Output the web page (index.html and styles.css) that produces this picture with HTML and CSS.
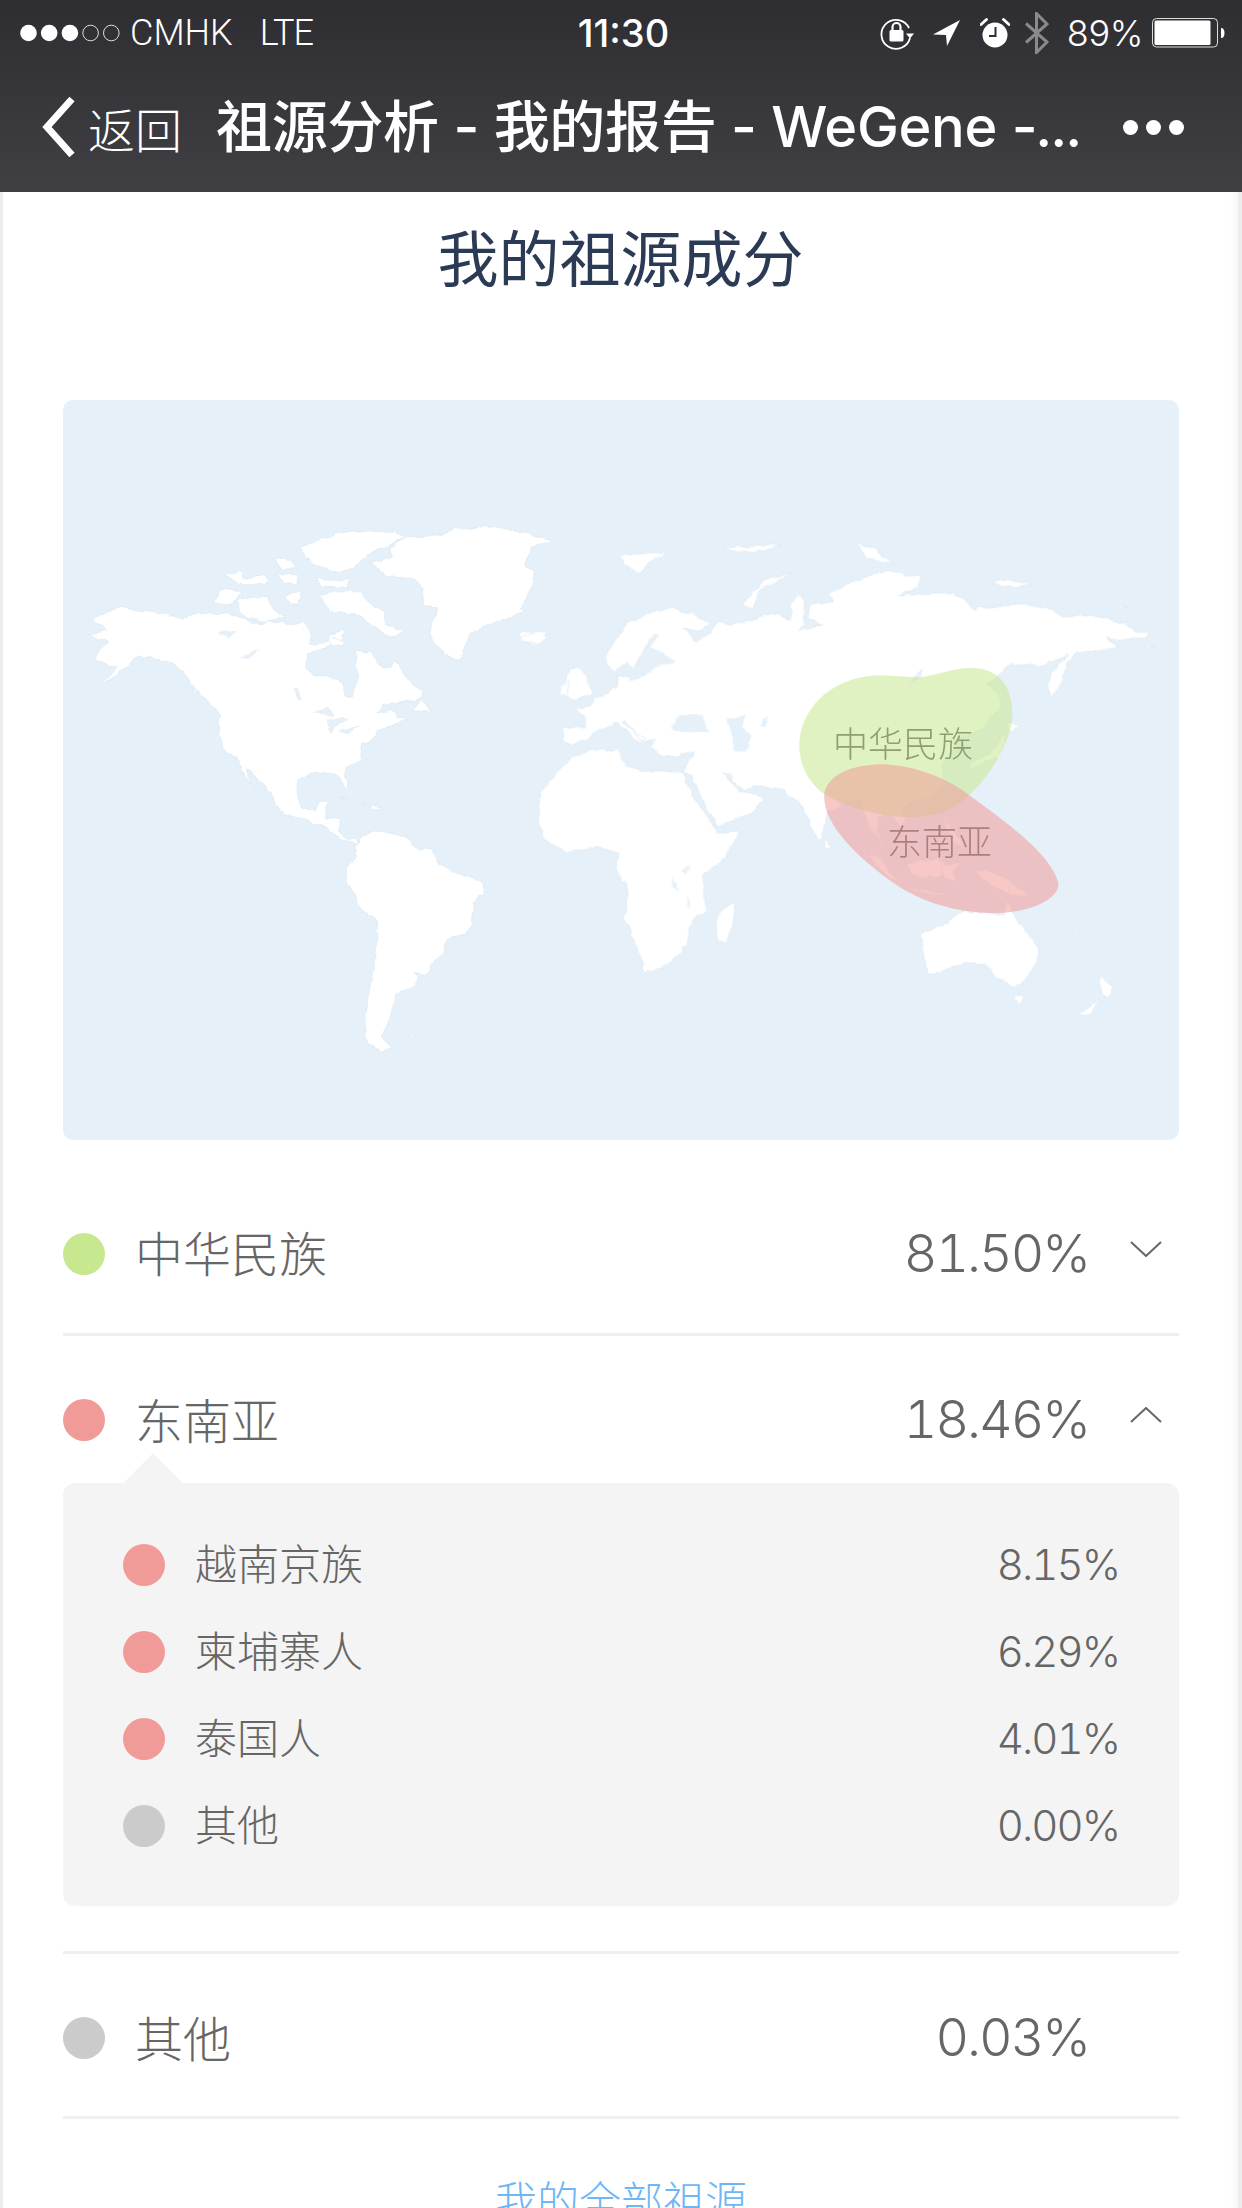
FILE: index.html
```html
<!DOCTYPE html>
<html lang="zh-CN">
<head>
<meta charset="utf-8">
<title>祖源分析</title>
<link rel="stylesheet" href="styles.css">
</head>
<body>
<div class="phone">
  <header class="nav">
    <div class="status">
      <div class="status-left">
        <svg class="signal" width="102" height="18" viewBox="0 0 102 18"><circle cx="8.5" cy="9" r="8.3" fill="#fff"/><circle cx="29.2" cy="9" r="8.3" fill="#fff"/><circle cx="49.9" cy="9" r="8.3" fill="#fff"/><circle cx="70.6" cy="9" r="7.8" fill="none" stroke="#ddd" stroke-width="1"/><circle cx="91.3" cy="9" r="7.8" fill="none" stroke="#ddd" stroke-width="1"/></svg>
        <span class="carrier">CMHK</span>
        <span class="network">LTE</span>
      </div>
      <div class="time">11:30</div>
      <div class="status-right">
        <svg class="st-icon" width="36" height="36" viewBox="0 0 36 36"><path d="M30 13 A14.5 14.5 0 1 0 31 23" fill="none" stroke="#fff" stroke-width="1.8"/><path d="M27 18.500h8l-4 5z" fill="#fff"/><rect x="10.500" y="15" width="14" height="11.500" rx="1.500" fill="#fff"/><path d="M13.500 16V12a4 4 0 0 1 8 0v4" fill="none" stroke="#fff" stroke-width="2.200"/></svg>
        <svg class="st-icon arrow" width="28" height="28" viewBox="0 0 28 28"><path d="M27 1 0 15.500l13 .500 1 11z" fill="#fff"/></svg>
        <svg class="st-icon alarm" width="30" height="30" viewBox="0 0 30 30"><circle cx="15" cy="17" r="12.500" fill="#fff"/><path d="M1 6.500 6.500 1.500M29 6.500 23.500 1.500" stroke="#fff" stroke-width="2.800" stroke-linecap="round"/><path d="M15.500 9v9H9" fill="none" stroke="#2f2f33" stroke-width="2"/></svg>
        <svg class="st-icon bt" width="24" height="42" viewBox="0 0 24 42"><path d="M1 11.500 22 30 11.500 40.500V1.500L22 12 1 30.500" fill="none" stroke="#8a8a8a" stroke-width="3"/></svg>
        <span class="battery-text">89%</span>
        <svg class="st-icon battery" width="73" height="30" viewBox="0 0 73 30"><rect x=".5" y=".5" width="65" height="28.500" rx="4" fill="none" stroke="#ddd" stroke-width="1"/><rect x="2.500" y="2.500" width="56" height="24.500" rx="1.500" fill="#fff"/><path d="M69 10c2.500 0 3.500 2 3.500 5s-1 5-3.500 5z" fill="#fff"/></svg>
      </div>
    </div>
    <div class="navbar">
      <svg class="back-icon" width="36" height="62" viewBox="0 0 36 62"><path d="M32 3 7 31l25 28" fill="none" stroke="#fff" stroke-width="7"/></svg>
      <span class="back-text">返回</span>
      <span class="nav-title">祖源分析 - 我的报告 - WeGene -<span class="ell">...</span></span>
      <span class="more"><i></i><i></i><i></i></span>
    </div>
  </header>

  <main class="card">
    <h1 class="title">我的祖源成分</h1>

    <div class="map">
      <svg class="map-svg" viewBox="63 400 1116 740" width="1116" height="740">
        <defs>
          <filter id="coast" x="-2%" y="-2%" width="104%" height="104%" color-interpolation-filters="sRGB">
            <feTurbulence type="fractalNoise" baseFrequency=".09" numOctaves="3" seed="4"/>
            <feDisplacementMap in="SourceGraphic" scale="6" xChannelSelector="R" yChannelSelector="G"/>
          </filter>
        </defs>
        <g class="coastlines">
        <g class="land" transform="translate(60 500) scale(.3827)">
          <path d="M85 315 110 295 135 290 160 280 200 290 265 295 325 312 340 300 385 290 400 300 440 297 485 310 500 322 550 318 590 325 640 320 655 345 650 378 700 372 705 350 745 340 735 370 690 385 650 400 640 430 660 455 700 460 738 478 745 510 765 515 770 480 785 455 770 430 775 395 810 400 840 435 865 440 878 418 900 455 925 485 948 500 945 515 920 525 880 528 845 535 828 560 865 548 880 565 905 570 870 590 830 600 825 620 790 640 785 680 750 700 745 725 755 755 740 750 725 715 690 710 650 715 625 730 620 770 630 805 670 810 680 790 703 790 690 830 730 835 728 865 750 890 775 885 780 900 755 895 720 880 700 855 660 845 630 830 590 820 562 795 555 770 520 735 497 705 487 700 500 745 528 775 490 730 465 680 430 650 415 620 415 590 420 560 385 525 355 495 325 450 290 425 235 410 205 408 180 430 150 460 105 480 150 440 120 430 90 420 100 395 125 375 125 365 95 365 75 352 105 345 125 340 90 318Z"/>
          <path d="M630 120 665 110 700 95 755 82 800 80 870 85 905 95 880 110 830 130 800 150 770 175 720 190 670 170 640 150Z"/>
          <path d="M430 200 470 185 480 205 530 195 555 215 500 225 470 215Z"/>
          <path d="M405 265 415 232 480 240 440 278Z"/>
          <path d="M460 260 540 250 560 290 590 305 540 318 490 310 470 290Z"/>
          <path d="M585 250 630 235 625 270 605 275Z"/>
          <path d="M680 250 720 240 780 240 810 270 850 295 850 330 900 340 875 358 850 350 830 335 770 295 720 295 700 285Z"/>
          <path d="M670 205 760 210 750 228 680 225Z"/>
          <path d="M560 150 600 155 620 180 580 180Z"/>
          <path d="M570 195 620 195 620 220 590 215Z"/>
          <path d="M700 352 750 375 710 382Z"/>
          <path d="M345 490 358 505 348 505Z"/>
          <path d="M925 550 945 518 970 555Z"/>
          <path d="M730 775 760 785 800 798 770 792Z"/>
          <path d="M810 800 845 805 815 812Z"/>
          <path d="M815 165 870 150 860 125 905 100 1000 90 1030 75 1120 70 1210 85 1285 105 1230 125 1215 175 1240 185 1230 230 1205 285 1215 290 1135 320 1070 350 1045 420 1005 405 975 370 965 340 985 280 950 270 945 225 920 205 850 200 840 185Z"/>
          <path d="M1200 345 1270 345 1270 365 1235 380 1205 365Z"/>
          <path d="M775 905 790 880 825 862 900 880 935 910 975 915 990 950 1035 975 1075 985 1108 1000 1105 1030 1080 1050 1075 1105 1060 1135 1010 1150 1000 1185 975 1210 955 1240 925 1235 940 1255 925 1272 875 1290 870 1320 860 1360 840 1395 845 1410 870 1432 840 1440 805 1420 795 1380 805 1300 815 1245 825 1190 830 1100 790 1075 770 1030 750 1000 752 960 775 930Z"/>
          <path d="M905 1400 930 1398 925 1406Z"/>
          <path class="lake" d="M410 345 465 340 440 362Z"/>
          <path class="lake" d="M470 410 525 390 495 412Z"/>
          <path class="lake" d="M610 490 622 492 632 525 620 520Z"/>
          <path class="lake" d="M662 558 700 542 720 565 690 560Z"/>
          <path class="lake" d="M700 570 755 570 730 590 705 612Z"/>
          <path class="lake" d="M730 605 785 588 750 612Z"/>
        </g>
        <g class="land" transform="translate(520 500) scale(.40816 .35714)">
          <path d="M103 640 160 637 160 608 138 585 170 575 205 540 240 522 240 490 265 500 290 490 260 450 240 478 210 465 208 435 265 345 300 320 370 300 440 330 465 350 440 365 400 355 415 375 430 400 465 375 490 340 520 350 600 325 630 320 665 340 660 300 680 265 700 280 695 350 680 365 710 360 740 350 705 330 710 295 770 285 755 262 800 235 900 195 945 210 985 215 975 245 925 270 990 262 1060 260 1095 285 1115 305 1180 295 1240 290 1300 305 1330 325 1400 320 1480 345 1510 370 1540 370 1535 390 1470 390 1440 385 1465 415 1445 420 1365 425 1345 450 1320 520 1300 558 1295 510 1305 480 1345 432 1280 465 1200 460 1175 490 1145 515 1170 540 1180 570 1160 600 1130 640 1090 660 1060 670 1070 690 1045 720 1030 740 1040 800 1010 830 970 845 935 860 950 890 930 920 905 880 880 890 875 930 905 985 880 950 855 910 830 840 790 850 770 870 755 870 735 955 715 920 695 860 670 835 640 810 580 800 550 815 530 800 515 770 500 765 540 820 575 820 600 840 570 875 485 915 455 860 420 770 400 760 425 705 385 720 345 715 320 690 335 670 300 680 280 650 258 615 250 620 305 670 295 682 240 625 195 640 165 670 125 685 105 670Z"/>
          <path d="M45 860 50 820 95 760 125 720 180 700 240 700 260 745 310 760 400 765 425 830 470 905 480 935 535 925 510 990 450 1050 455 1150 420 1180 410 1240 370 1300 305 1325 290 1260 255 1170 265 1100 235 1030 240 990 190 970 110 985 60 950 45 900Z"/>
          <path d="M520 1125 528 1160 505 1240 485 1238 478 1195 490 1155Z"/>
          <path d="M95 545 125 470 150 470 180 545 140 560Z"/>
          <path d="M98 520 120 510 115 545 95 548Z"/>
          <path d="M0 385 45 370 68 385 40 405 5 395Z"/>
          <path d="M245 155 360 145 325 170 290 205 255 180Z"/>
          <path d="M545 290 600 225 670 205 590 250 570 305Z"/>
          <path d="M500 135 640 125 600 145 520 142Z"/>
          <path d="M825 125 860 130 920 180 850 165Z"/>
          <path d="M1160 225 1205 225 1255 240 1180 245Z"/>
          <path d="M1462 300 1490 298 1470 305Z"/>
          <path d="M1530 408 1555 412 1540 415Z"/>
          <path d="M1190 625 1225 630 1205 650Z"/>
          <path d="M1190 645 1175 720 1130 740 1100 755 1105 735 1155 710Z"/>
          <path d="M750 945 762 975 745 975Z"/>
          <path d="M1035 870 1045 900 1040 915Z"/>
          <path d="M852 985 885 1010 930 1070 905 1060 865 1015Z"/>
          <path d="M950 1015 1000 1005 1040 1010 1040 1050 985 1060 955 1050Z"/>
          <path d="M925 1082 1000 1095 1080 1108 1000 1105Z"/>
          <path d="M1030 1020 1080 1015 1060 1040 1070 1065 1040 1060Z"/>
          <path d="M1040 890 1060 920 1090 970 1060 960Z"/>
          <path d="M1115 1035 1160 1040 1215 1080 1250 1115 1190 1100 1130 1060Z"/>
          <path d="M980 1215 1050 1180 1090 1150 1150 1155 1185 1165 1190 1120 1215 1170 1270 1250 1270 1290 1230 1350 1210 1365 1170 1340 1140 1300 1090 1295 1000 1330 990 1280Z"/>
          <path d="M1210 1390 1235 1390 1225 1415Z"/>
          <path d="M1420 1330 1455 1360 1440 1395 1425 1385Z"/>
          <path d="M1420 1395 1395 1445 1370 1440Z"/>
          <path d="M1355 1200 1372 1215 1360 1212Z"/>
          <path class="lake" d="M290 440 325 375 345 375 320 410 380 450 330 470 300 495 265 510Z"/>
          <path class="lake" d="M365 640 395 600 445 600 465 650 400 650Z"/>
          <path class="lake" d="M505 610 550 600 545 640 565 660 555 705 525 700 515 650Z"/>
          <path class="lake" d="M590 615 605 612 605 630 592 630Z"/>
          <path class="lake" d="M392 1040 415 1022 410 1045Z"/>
          <path class="lake" d="M375 1050 388 1095 375 1085Z"/>
          <path class="lake" d="M410 1105 418 1145 410 1135Z"/>
          <path class="lake" d="M950 515 990 470 985 490 975 505Z"/>
        </g>
        </g>
        <g transform="translate(640 500) scale(.34483)">
          <path class="blob-green" d="M462 710C462 620 540 510 700 508 770 510 800 520 860 505 900 495 950 480 1000 492 1060 510 1080 560 1080 630 1075 700 1010 810 950 860 900 905 850 920 780 920 690 918 590 890 530 850 480 810 462 760 462 710Z"/>
          <path class="blob-pink" d="M534 860C535 810 590 768 700 766 800 768 900 810 960 860 1040 920 1190 1020 1213 1110 1220 1160 1120 1200 1020 1198 900 1195 800 1160 720 1100 640 1040 535 950 534 860Z"/>
        </g>
        <text class="map-label green-label" x="833" y="757">中华民族</text>
        <text class="map-label pink-label" x="887" y="855">东南亚</text>
      </svg>
    </div>

    <div class="row row-first">
      <span class="dot green"></span><span class="name">中华民族</span>
      <span class="pct">81.50%</span>
      <svg class="chev" width="32" height="16" viewBox="0 0 32 16"><path d="M1 1 16 15 31 1" fill="none" stroke="#666" stroke-width="2"/></svg>
    </div>
    <div class="row row-open">
      <span class="dot pink"></span><span class="name">东南亚</span>
      <span class="pct">18.46%</span>
      <svg class="chev" width="32" height="16" viewBox="0 0 32 16"><path d="M1 15 16 1 31 15" fill="none" stroke="#666" stroke-width="2"/></svg>
    </div>
    <div class="panel">
      <div class="sub"><span class="dot pink"></span><span class="sub-name">越南京族</span><span class="sub-pct">8.15%</span></div>
      <div class="sub"><span class="dot pink"></span><span class="sub-name">柬埔寨人</span><span class="sub-pct">6.29%</span></div>
      <div class="sub"><span class="dot pink"></span><span class="sub-name">泰国人</span><span class="sub-pct">4.01%</span></div>
      <div class="sub"><span class="dot gray"></span><span class="sub-name">其他</span><span class="sub-pct">0.00%</span></div>
    </div>
    <div class="rule rule-after-panel"></div>
    <div class="row row-last">
      <span class="dot gray"></span><span class="name">其他</span>
      <span class="pct">0.03%</span>
      <span class="chev-gap"></span>
    </div>
    <a class="all-link">我的全部祖源</a>
  </main>
</div>
</body>
</html>
```
FILE: styles.css
```css
* { box-sizing: border-box; }
html, body { margin: 0; padding: 0; background: #ededf0; }
body { font-family: "Noto Sans CJK SC", sans-serif; }
.phone { width: 1242px; height: 2208px; overflow: hidden; background: #ededf0; }

.nav { height: 192px; background: linear-gradient(#2e2e32, #3f3f44); color: #fff; }
.status { height: 62px; display: grid; grid-template-columns: 1fr auto 1fr; align-items: center; padding: 4px 17px 0 20px; }
.status-left { display: flex; align-items: center; font: 300 36px/58px Roboto, sans-serif; }
.signal { margin-right: 8px; }
.carrier { margin-right: 27px; }
.network { letter-spacing: -1px; }
.time { font: 500 38px/58px Inter, sans-serif; margin-left: 2px; }
.status-right { display: flex; align-items: center; justify-content: flex-end; }
.st-icon { display: block; }
.arrow { margin-left: 18px; }
.alarm { margin-left: 19px; }
.bt { margin-left: 15px; }
.battery-text { font: 300 36px/58px Inter, sans-serif; margin-left: 18px; letter-spacing: -.4px; }
.battery { margin-left: 9px; }

.navbar { height: 130px; display: flex; align-items: center; padding: 0 58px 0 40px; }
.back-icon { flex: none; }
.back-text { font: 300 47px/1 "Noto Sans CJK SC", sans-serif; margin-left: 12px; }
.nav-title { flex: 1; font: 500 56px/1 Inter, "Noto Sans CJK SC", sans-serif; margin-left: 34px; white-space: nowrap; letter-spacing: -.3px; }
.ell { letter-spacing: -2px; margin-left: -2px; }
.more { display: flex; gap: 8px; }
.more i { display: block; width: 15px; height: 15px; border-radius: 50%; background: #fff; }

.card { margin: 0 4px 0 3px; height: 2016px; background: #fff; padding: 0 60px 0 60px; overflow: hidden; box-shadow: inset -10px 0 8px -8px #f3f3f5; }
.title { margin: 0; height: 208px; padding-top: 24px; text-align: center; font: 400 61px/80px "Noto Sans CJK SC", sans-serif; color: #2b3a55; }
.map { height: 740px; width: 1116px; border-radius: 10px; background: #e6f0f8; overflow: hidden; }
.map-svg { display: block; }
.coastlines { filter: url(#coast); }
.land path { fill: #fff; stroke: #dce8f3; stroke-width: 2; stroke-linejoin: round; }
.land .lake { fill: #e6f0f8; stroke: none; }
.blob-green { fill: rgba(200, 232, 144, .55); }
.blob-pink { fill: rgba(241, 155, 152, .55); }
.map-label { font: 300 35px "Noto Sans CJK SC", sans-serif; }
.green-label { fill: #8f9f72; }
.pink-label { fill: #ad7f7f; }

.row { display: flex; align-items: center; color: #666; width: 1116px; }
.row-first { height: 196px; padding-top: 34px; border-bottom: 3px solid #efefef; }
.row-open { height: 147px; padding-top: 21px; position: relative; }
.row-open::after { content: ""; position: absolute; left: 69px; bottom: -21px; width: 42px; height: 42px; background: #f4f4f4; transform: rotate(45deg); }
.row-last { height: 165px; padding-top: 6px; border-bottom: 3px solid #efefef; }
.dot { flex: none; width: 42px; height: 42px; border-radius: 50%; }
.green { background: #c8e890; }
.pink { background: #f19b98; }
.gray { background: #cbcbcb; }
.name { flex: 1; margin-left: 30px; padding-bottom: 5px; font: 300 48px/1 "Noto Sans CJK SC", sans-serif; }
.pct { font: 300 52px/1 Inter, sans-serif; font-variant-numeric: tabular-nums; letter-spacing: -2px; }
.chev { margin: 0 17px 10px 41px; flex: none; }
.chev-gap { flex: none; width: 90px; }

.panel { position: relative; width: 1116px; height: 423px; padding: 38px 60px 37px 60px; border-radius: 12px; background: #f4f4f4; }
.sub { display: flex; align-items: center; height: 87px; color: #666; }
.sub-name { flex: 1; margin-left: 30px; padding-bottom: 5px; font: 300 42px/1 "Noto Sans CJK SC", sans-serif; }
.sub-pct { font: 300 42px/1 Inter, sans-serif; font-variant-numeric: tabular-nums; letter-spacing: -2px; }

.rule { height: 3px; width: 1116px; background: #efefef; }
.rule-after-panel { margin-top: 45px; }
.all-link { display: block; width: 1116px; margin-top: 50px; text-align: center; font: 300 42px/60px "Noto Sans CJK SC", sans-serif; color: #6fb6f5; }
```
